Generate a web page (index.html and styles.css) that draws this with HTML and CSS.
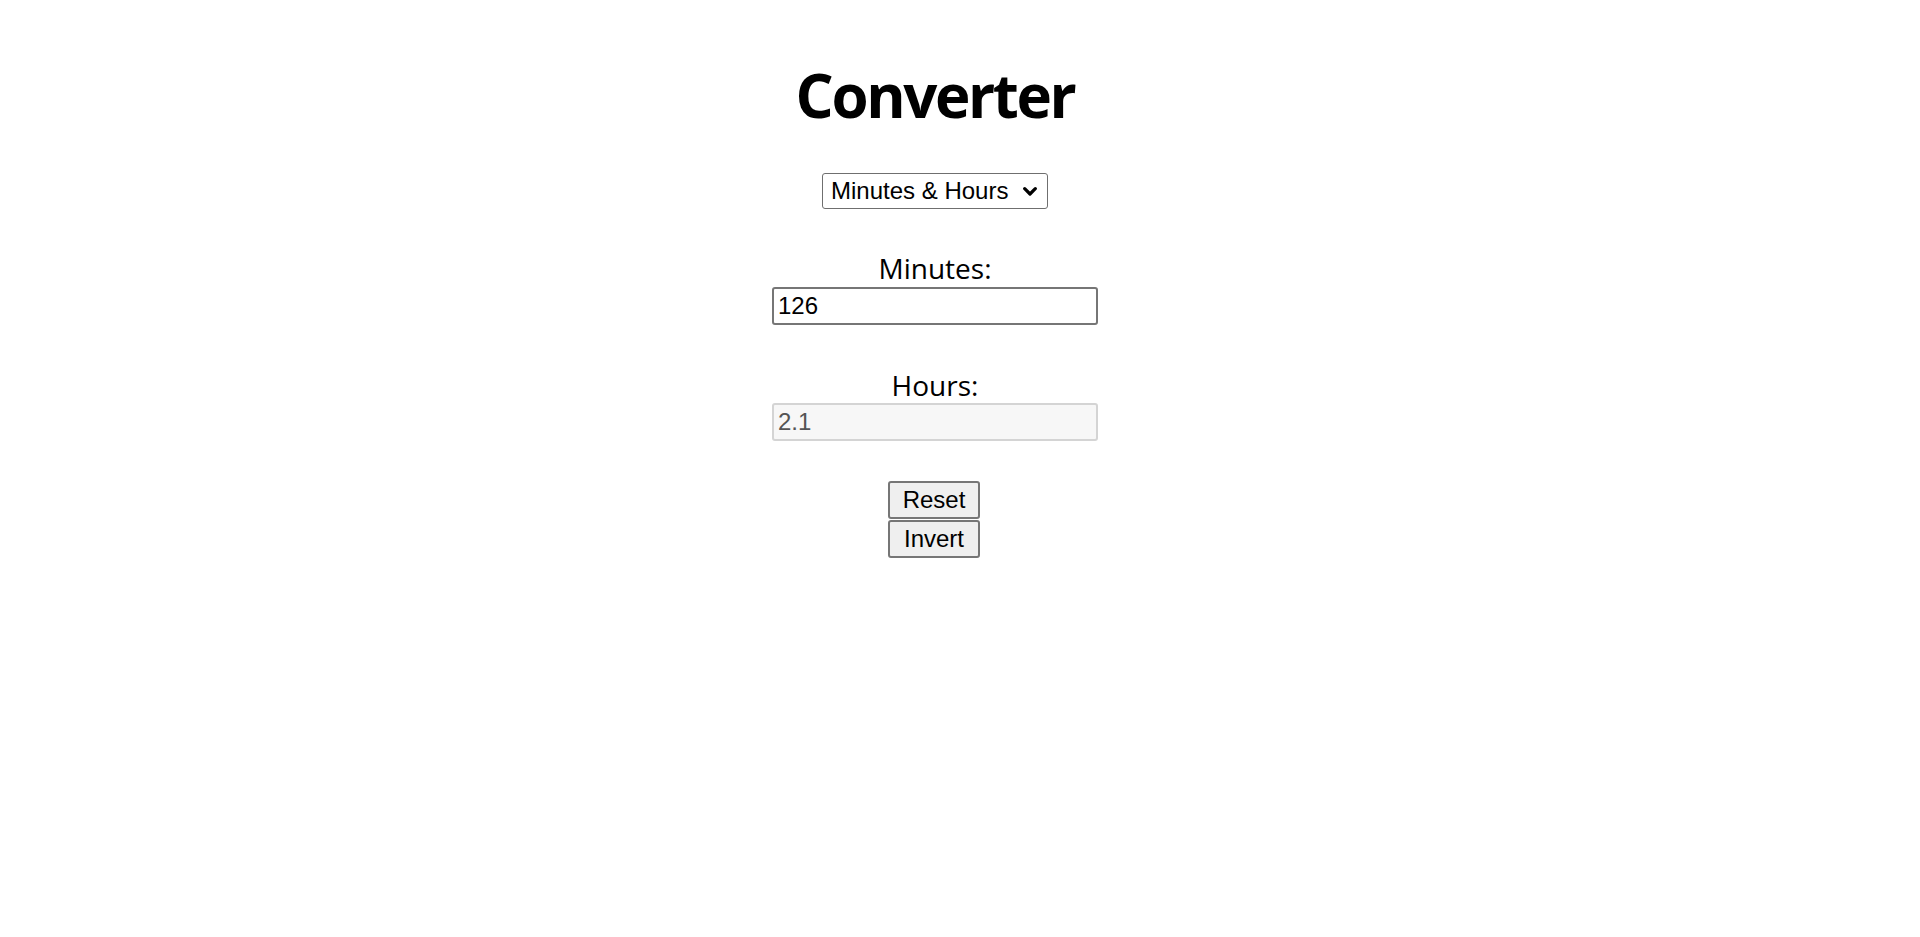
FILE: index.html
```html
<!DOCTYPE html>
<html>
<head>
<meta charset="utf-8">
<link rel="stylesheet" href="styles.css">
</head>
<body>
<main class="app">
  <h1 class="title">Converter</h1>
  <div class="select-box">
    <span class="select-text">Minutes &amp; Hours</span>
    <svg class="chev" width="14" height="9" viewBox="0 0 14 9"><path d="M1.7 1.7 L7 7 L12.3 1.7" fill="none" stroke="#000" stroke-width="3.2" stroke-linecap="round" stroke-linejoin="round"/></svg>
  </div>
  <div class="field first">
    <div class="label">Minutes:</div>
    <div class="input">126</div>
  </div>
  <div class="field second">
    <div class="label">Hours:</div>
    <div class="input disabled">2.1</div>
  </div>
  <div class="buttons">
    <div class="btn">Reset</div>
    <div class="btn">Invert</div>
  </div>
</main>
</body>
</html>
```

FILE: styles.css
```css
html, body {
  margin: 0;
  padding: 0;
  background: #fff;
}
.app {
  display: flex;
  flex-direction: column;
  align-items: center;
  padding-right: 50px;
  font-family: "Open Sans", "Noto Sans", sans-serif;
  color: #000;
}
.title {
  margin: 55px 0 0 0;
  font-size: 60px;
  line-height: 80px;
  font-weight: 700;
  letter-spacing: -2.4px;
  height: 80px;
}
.select-box {
  margin-top: 38px;
  box-sizing: border-box;
  width: 226px;
  height: 36px;
  border: 1.5px solid #6f6f6f;
  border-radius: 3px;
  display: flex;
  align-items: center;
  padding: 0 10px 0 8px;
  font-family: "Liberation Sans", Arial, sans-serif;
  font-size: 24px;
  justify-content: space-between;
}
.select-text { line-height: 28px; }
.field {
  display: flex;
  flex-direction: column;
  align-items: center;
}
.field.first { margin-top: 41px; }
.field.first .label { margin-bottom: 1px; }
.field.second { margin-top: 42px; }
.label {
  font-size: 28px;
  line-height: 36px;
  font-weight: 400;
}
.input {
  box-sizing: border-box;
  width: 326px;
  height: 38px;
  border: 2px solid #767676;
  border-radius: 3px;
  font-family: "Liberation Sans", Arial, sans-serif;
  font-size: 24px;
  line-height: 34px;
  padding: 0 4px;
  text-align: left;
}
.input.disabled {
  border-color: #d4d4d4;
  background: #f7f7f7;
  color: #545454;
}
.buttons {
  margin-top: 40px;
  margin-right: 2px;
  display: flex;
  flex-direction: column;
  align-items: center;
  gap: 1px;
}
.btn {
  box-sizing: border-box;
  width: 92px;
  height: 38px;
  border: 2px solid #767676;
  border-radius: 3px;
  background: #efefef;
  font-family: "Liberation Sans", Arial, sans-serif;
  font-size: 24px;
  line-height: 34px;
  text-align: center;
}
```
